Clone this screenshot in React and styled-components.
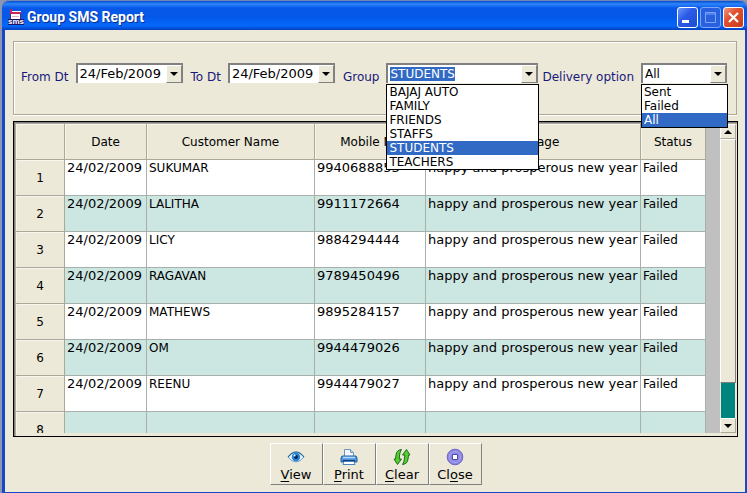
import { useEffect, useRef, useState } from 'react';
import styled, { createGlobalStyle } from 'styled-components';

const groups = ["BAJAJ AUTO", "FAMILY", "FRIENDS", "STAFFS", "STUDENTS", "TEACHERS"]
const options = ["Sent", "Failed", "All"]

const messages = [
    { name: "SUKUMAR", mobile: "9940688853" },
    { name: "LALITHA", mobile: "9911172664" },
    { name: "LICY", mobile: "9884294444" },
    { name: "RAGAVAN", mobile: "9789450496" },
    { name: "MATHEWS", mobile: "9895284157" },
    { name: "OM", mobile: "9944479026" },
    { name: "REENU", mobile: "9944479027" },
]

export default function App(){
    const [group, setGroup] = useState("STUDENTS")
    const [delivery, setDelivery] = useState("All")

    return (
        <>
            <GlobalStyle/>
            <Window>
                <TitleBar>
                    <SmsIcon/>
                    <h1>Group SMS Report</h1>
                    <Caption aria-label="Minimize">
                        <svg width="19" height="19"><path d="M4 12h7v3H4z" fill="#fff"/></svg>
                    </Caption>
                    <Caption aria-label="Maximize" disabled>
                        <svg width="19" height="19"><path d="M4.500 4.500h10v10h-10zM4 6h11" fill="none" stroke="#7da5f5" strokeWidth="1"/></svg>
                    </Caption>
                    <Caption aria-label="Close window" $close>
                        <svg width="19" height="19"><path d="M5 5l9 9M14 5l-9 9" stroke="#fff" strokeWidth="2.200"/></svg>
                    </Caption>
                </TitleBar>

                <Body>
                    <Filters>
                        <DateField id="from" label="From Dt"/>
                        <DateField id="to" label="To Dt"/>
                        <ListField id="group" label="Group" items={groups} value={group} setValue={setGroup} grow selected/>
                        <ListField id="delivery" label="Delivery option" items={options} value={delivery} setValue={setDelivery}/>
                    </Filters>

                    <Grid>
                        <Sheet>
                            <Table>
                                <colgroup>
                                    <Col $width={49}/>
                                    <Col $width={82}/>
                                    <Col $width={168}/>
                                    <Col $width={111}/>
                                    <Col/>
                                    <Col $width={65}/>
                                </colgroup>
                                <thead>
                                    <tr>
                                        <HeadCell></HeadCell>
                                        <HeadCell>Date</HeadCell>
                                        <HeadCell>Customer Name</HeadCell>
                                        <HeadCell>Mobile No</HeadCell>
                                        <HeadCell>Message</HeadCell>
                                        <HeadCell>Status</HeadCell>
                                    </tr>
                                </thead>
                                <tbody>
                                    {messages.map((message, i) => {
                                        return (
                                            <Row key={message.name}>
                                                <HeadCell scope="row">{i + 1}</HeadCell>
                                                <Cell $large>24/02/2009</Cell>
                                                <Cell>{message.name}</Cell>
                                                <Cell $large>{message.mobile}</Cell>
                                                <Cell $large>happy and prosperous new year</Cell>
                                                <Cell>Failed</Cell>
                                            </Row>
                                        )
                                    })}
                                    <Row>
                                        <HeadCell scope="row">8</HeadCell>
                                        <Cell/><Cell/><Cell/><Cell/><Cell/>
                                    </Row>
                                </tbody>
                            </Table>
                        </Sheet>
                        <ScrollBar>
                            <ScrollButton aria-label="Scroll up"><Arrow $up/></ScrollButton>
                            <Thumb/>
                            <Track/>
                            <ScrollButton aria-label="Scroll down"><Arrow/></ScrollButton>
                        </ScrollBar>
                    </Grid>

                    <Actions>
                        <Action><EyeIcon/><span><u>V</u>iew</span></Action>
                        <Action><PrinterIcon/><span><u>P</u>rint</span></Action>
                        <Action><ClearIcon/><span><u>C</u>lear</span></Action>
                        <Action><StopIcon/><span>Cl<u>o</u>se</span></Action>
                    </Actions>
                </Body>
            </Window>
        </>
    )
}

function DateField({ id, label }){
    const [date, setDate] = useState("24/Feb/2009")

    return (
        <DateBox>
            <label htmlFor={id}>{label}</label>
            <Combo $width={107} $large>
                <input id={id} value={date} onChange={(e) => setDate(e.target.value)}/>
                <DropButton aria-label={"Pick " + label}><Arrow/></DropButton>
            </Combo>
        </DateBox>
    )
}

function ListField({ id, label, items, value, setValue, selected, grow }){
    const [open, setOpen] = useState(true)
    const input = useRef(null)

    useEffect(() => {
        if (selected) {
            input.current.focus()
            input.current.select()
        }
    }, [selected])

    return (
        <Field $grow={grow}>
            <label htmlFor={id}>{label}</label>
            <Combo $width={86} $grow={grow}>
                <input id={id} ref={input} value={value} onChange={(e) => setValue(e.target.value)}/>
                <DropButton aria-label={"Open " + label} onClick={() => setOpen(!open)}><Arrow/></DropButton>
                {open && (
                    <List aria-label={label} size={items.length} $rows={items.length} value={value} onChange={(e) => setValue(e.target.value)}>
                        {items.map((item) => <option key={item}>{item}</option>)}
                    </List>
                )}
            </Combo>
        </Field>
    )
}

function SmsIcon(){
    return (
        <svg width="16" height="17" viewBox="0 0 16 17">
            <path d="M2 2h11v8H2z" fill="#fff"/>
            <path d="M2 0h2v3h9v2H2z" fill="#c8245c"/>
            <path d="M2 5h1v5H2zM12 5h1v5h-1z" fill="#50286c"/>
            <path d="M4 7h7v1H4z" fill="#e8a8c8"/>
            <path d="M0 10h16v6H0z" fill="#14146c"/>
            <text x="8" y="15" textAnchor="middle" fontFamily="Liberation Sans, sans-serif" fontWeight="bold" fontSize="8" fill="#fff">sms</text>
        </svg>
    )
}

function EyeIcon(){
    return (
        <svg width="18" height="18" viewBox="0 0 18 18">
            <path d="M1 9Q5 4 9 4t8 5q-4 5-8 5T1 9z" fill="#e8f4fc" stroke="#6f9fc4"/>
            <path d="M1 9Q5 4 9 4t8 5" fill="none" stroke="#286890" strokeWidth="1.200"/>
            <circle cx="9" cy="9" r="4.200" fill="#2684d8"/>
            <circle cx="9" cy="9" r="2" fill="#0a2856"/>
            <circle cx="7.600" cy="7.500" r="1" fill="#fff"/>
        </svg>
    )
}

function PrinterIcon(){
    return (
        <svg width="18" height="18" viewBox="0 0 18 18">
            <path d="M4.500 9V1.500h6l3 3V9z" fill="#f6faff" stroke="#6c94bc"/>
            <path d="M10.500 1.500v3h3" fill="#c6daf0" stroke="#6c94bc"/>
            <path d="M2 8h14l1 2v4H1v-4z" fill="#4c94e0" stroke="#2060a0"/>
            <path d="M3 9.500h12" stroke="#b4dcfc" strokeWidth="1.500"/>
            <path d="M3 12h12v2H3z" fill="#103c70"/>
            <path d="M4 13.500h10l1 3H3z" fill="#fff" stroke="#4884c0"/>
        </svg>
    )
}

function ClearIcon(){
    return (
        <svg width="18" height="18" viewBox="0 0 18 18">
            <path d="M8.500 1.500Q3.500 2 3 7l-.5 4H1l3.500 5.500L8.500 11H6.200l.4-4q.2-3 1.900-5.500z" fill="#58cc30" stroke="#187018"/>
            <path d="M9.500 16.500q5-.5 5.500-5.500l.5-4H17l-3.500-5.500L9.500 7h2.300l-.4 4q-.2 3-1.900 5.500z" fill="#58cc30" stroke="#187018"/>
        </svg>
    )
}

function StopIcon(){
    return (
        <svg width="18" height="18" viewBox="0 0 18 18">
            <circle cx="9" cy="9" r="7.800" fill="#8c88e4" stroke="#6c64c4"/>
            <circle cx="9" cy="9" r="5.500" fill="none" stroke="#a8a4f0"/>
            <path d="M6.500 6.500h5v5h-5z" fill="#fff" stroke="#5048a8"/>
        </svg>
    )
}

const GlobalStyle = createGlobalStyle`
    *{
        box-sizing: border-box;
    }

    body{
        margin: 0;
        background-color: #8c96b4;
    }

    body, button, input, select{
        font-family: "DejaVu Sans", Verdana, sans-serif;
        font-size: 12px;
        line-height: 14px;
        color: #000;
    }
`;

const Window = styled.div`
    height: 100vh;
    margin-left: 2px;
    display: flex;
    flex-direction: column;
    background-color: #ece9d8;
    border: solid #1848c8;
    border-width: 0 2px 1px 3px;
    border-radius: 8px 8px 0 0;
`;

const TitleBar = styled.header`
    height: 30px;
    margin: 0 -2px 0 -3px;
    padding: 3px 3px 0 6px;
    display: flex;
    align-items: center;
    gap: 2px;
    border-top: solid 1px #7088b8;
    border-radius: 8px 8px 0 0;
    background: linear-gradient(#0848c8, #2c86fc 10%, #0858e8 24%, #0458e8 55%, #0468fc 85%, #0440c0);

    h1{
        flex: 1;
        margin: 0 0 0 1px;
        font: bold 14px/18px Roboto, sans-serif;
        color: white;
        text-shadow: 1px 1px #083090;
    }
`;

const Caption = styled.button`
    width: 21px;
    height: 21px;
    padding: 0;
    display: flex;
    border: solid 1px ${(props) => props.disabled ? "#7da5f5" : "#fff"};
    border-radius: 3px;
    background: ${(props) => props.$close ? "linear-gradient(135deg, #f09878, #e05030 40%, #c83c18)" : props.disabled ? "#2860e0" : "linear-gradient(135deg, #6c98f8, #2c5ce8 40%, #1c4cd0)"};
`;

const Body = styled.main`
    flex: 1;
    min-height: 0;
    padding: 11px 7px 7px 8px;
    display: flex;
    flex-direction: column;
`;

const Filters = styled.section`
    height: 74px;
    margin-right: 1px;
    padding: 21px 9px 0 7px;
    display: flex;
    align-items: flex-start;
    gap: 4px;
    border: solid 1px #aca899;
    box-shadow: inset 1px 1px #fff, 0 1px #fff;
`;

const Field = styled.div`
    height: 21px;
    display: flex;
    align-items: flex-end;
    gap: 7px;
    flex: ${(props) => props.$grow ? "1" : "none"};

    label{
        color: #18187c;
        white-space: nowrap;
    }
`;

const DateBox = styled(Field)`
    margin-right: 4px;
`;

const Combo = styled.div`
    position: relative;
    align-self: flex-start;
    width: ${(props) => props.$width}px;
    flex: ${(props) => props.$grow ? "1" : "none"};
    height: 20px;
    display: flex;
    background-color: white;
    border: solid #808080;
    border-width: 2px 1px 0 2px;

    input{
        flex: 1;
        width: 0;
        min-width: 0;
        padding: 0 0 0 2px;
        font-size: ${(props) => props.$large ? "13px" : "12px"};
        border: none;
        outline: none;
        background: none;
    }

    input::selection{
        background-color: #316ac5;
        color: white;
    }
`;

const DropButton = styled.button`
    width: 16px;
    padding: 0;
    display: flex;
    align-items: center;
    justify-content: center;
    background-color: #ece9d8;
    border: solid 1px;
    border-color: #fff #808080 #808080 #fff;
`;

const Arrow = styled.i`
    border: solid 4px transparent;
    border-width: ${(props) => props.$up ? "0 4px 4px" : "4px 4px 0"};
    border-top-color: ${(props) => props.$up ? "transparent" : "#000"};
    border-bottom-color: ${(props) => props.$up ? "#000" : "transparent"};
`;

const List = styled.select`
    position: absolute;
    z-index: 1;
    top: 19px;
    left: -2px;
    width: calc(100% + 4px);
    height: ${(props) => props.$rows * 14 + 2}px;
    padding: 0;
    appearance: none;
    overflow: hidden;
    background-color: white;
    border: solid 1px black;
    border-radius: 0;
    outline: none;

    option{
        height: 14px;
        min-height: 14px;
        padding: 0 2px;
        line-height: 14px;
        color: black;
    }

    option:checked{
        background: #316ac5 linear-gradient(#316ac5, #316ac5);
        color: white;
    }
`;

const Grid = styled.section`
    flex: 1;
    min-height: 0;
    margin-top: 6px;
    display: flex;
    border: solid 1px black;
    box-shadow: inset 1px 1px #808080, inset 2px 2px #aca899;
    padding: 2px 1px 3px 2px;
`;

const Sheet = styled.div`
    flex: 1;
    overflow: hidden;
    padding-right: 14px;
    background-color: #c0c0c0;
`;

const Table = styled.table`
    width: 100%;
    table-layout: fixed;
    border-collapse: separate;
    border-spacing: 0;
`;

const Col = styled.col`
    width: ${(props) => props.$width ? props.$width + "px" : "auto"};
`;

const HeadCell = styled.th`
    height: 36px;
    padding: 0;
    font-weight: normal;
    background-color: #ece9d8;
    border: solid #aca899;
    border-width: 0 1px 1px 0;
    box-shadow: inset 1px 1px #f8f6ec;
`;

const Cell = styled.td`
    height: 36px;
    padding: 1px 0 0 2px;
    vertical-align: top;
    white-space: nowrap;
    font-size: ${(props) => props.$large ? "13px" : "12px"};
    border: solid #a8b0ac;
    border-width: 0 1px 1px 0;
`;

const Row = styled.tr`
    background-color: white;

    &:nth-child(even){
        background-color: #cce6e2;
    }
`;

const ScrollBar = styled.div`
    width: 16px;
    display: flex;
    flex-direction: column;
    background-color: #ece9d8;
`;

const ScrollButton = styled.button`
    height: 15px;
    padding: 0;
    display: flex;
    align-items: center;
    justify-content: center;
    background-color: #ece9d8;
    border: solid 1px;
    border-color: #fff #aca899 #aca899 #fff;
`;

const Thumb = styled.div`
    flex: 7;
    border: solid 1px;
    border-color: #fff #808080 #808080 #fff;
`;

const Track = styled.div`
    flex: 1;
    margin: 0 1px;
    background-color: #008480;
`;

const Actions = styled.footer`
    margin-top: 6px;
    display: flex;
    justify-content: center;
`;

const Action = styled.button`
    width: 53px;
    height: 42px;
    padding: 4px 0 2px;
    display: flex;
    flex-direction: column;
    align-items: center;
    justify-content: space-between;
    background-color: #ece9d8;
    border: solid 1px;
    border-color: #fff #808080 #808080 #fff;
    font-size: 13px;

    u{
        text-underline-offset: 2px;
    }
`;
